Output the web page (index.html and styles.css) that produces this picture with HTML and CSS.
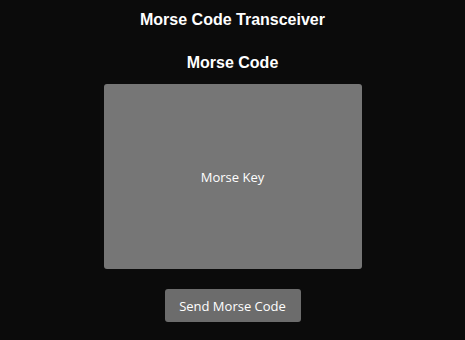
FILE: index.html
```html
<!DOCTYPE html>
<html>
<head>
<meta charset="utf-8">
<link rel="stylesheet" href="styles.css">
</head>
<body>
<div class="app">
  <h1 class="title">Morse Code Transceiver</h1>
  <h2 class="subtitle">Morse Code</h2>
  <div class="key">Morse Key</div>
  <button class="send">Send Morse Code</button>
</div>
</body>
</html>
```
FILE: styles.css
```css
html, body {
  margin: 0;
  padding: 0;
  background: #0b0b0b;
  height: 100%;
}
.app {
  display: flex;
  flex-direction: column;
  align-items: center;
  padding-top: 11px;
}
.title {
  margin: 0;
  font-family: "Liberation Sans", Arial, sans-serif;
  font-weight: bold;
  font-size: 16px;
  line-height: 18px;
  color: #ffffff;
}
.subtitle {
  margin: 25px 0 0 0;
  font-family: "Liberation Sans", Arial, sans-serif;
  font-weight: bold;
  font-size: 16px;
  line-height: 18px;
  color: #ffffff;
}
.key {
  margin-top: 12px;
  width: 258px;
  height: 185px;
  background: #767676;
  border-radius: 3px;
  display: flex;
  align-items: center;
  justify-content: center;
  font-family: "Open Sans", sans-serif;
  font-size: 13px;
  color: #ffffff;
}
.send {
  margin-top: 20px;
  width: 136px;
  height: 33px;
  padding: 0;
  border: none;
  border-radius: 3px;
  background: #6c6c6c;
  font-family: "Open Sans", sans-serif;
  font-size: 13px;
  color: #ffffff;
}
```
